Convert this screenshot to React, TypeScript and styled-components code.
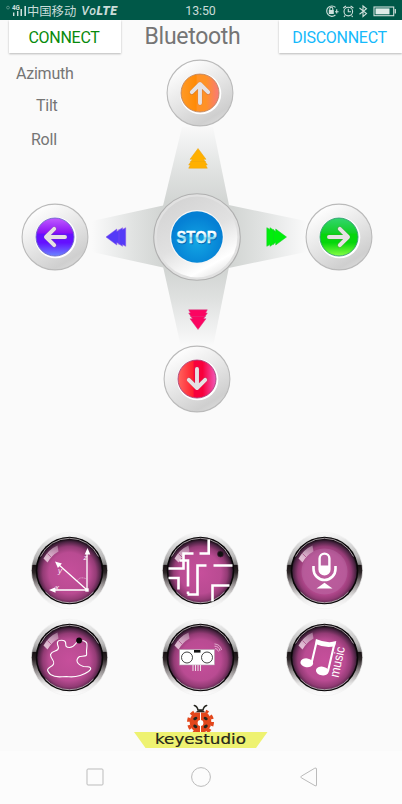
import React from 'react';
import styled, { createGlobalStyle } from 'styled-components';

const GlobalStyle = createGlobalStyle`
  * { box-sizing: border-box; }
  body { margin: 0; background: #fafafa; font-family: Roboto, "Noto Sans CJK SC", sans-serif; overflow: hidden; }
  svg { display: block; overflow: visible; }
`;

const Screen = styled.div`
  width: 402px;
  height: 804px;
  display: flex;
  flex-direction: column;
  background: #fafafa;
`;

const StatusBar = styled.header`
  height: 20px;
  flex: none;
  display: grid;
  grid-template-columns: 1fr 60px 1fr;
  align-items: center;
  padding: 0 4px 0 6px;
  background: #005848;
  color: #c9dcd8;
  font-size: 12px;
  line-height: 20px;
`;

const Carrier = styled.div`
  display: flex;
  align-items: center;
  white-space: nowrap;
`;

const CarrierName = styled.span`
  margin-left: 1px;
  font-family: "Noto Sans CJK SC", sans-serif;
  font-size: 12.3px;
`;

const Volte = styled.em`
  margin-left: 5px;
  font-size: 12.3px;
  font-weight: 500;
  letter-spacing: 0.5px;
  padding-top: 1px;
  b { font-weight: 900; }
`;

const Clock = styled.time`
  text-align: center;
  font-size: 12.4px;
  letter-spacing: -0.1px;
  padding: 1px 3px 0 0;
`;

const StatusIcons = styled.div`
  display: flex;
  justify-content: flex-end;
`;

const TopRow = styled.div`
  height: 33px;
  flex: none;
  display: grid;
  grid-template-columns: 112px 158px 123px;
  padding-left: 9px;
`;

const FlatButton = styled.button<{ $color: string }>`
  border: 0;
  margin: 0;
  padding: 1px 2px 0 0;
  background: #fff;
  color: ${(p) => p.$color};
  font: 400 16px Roboto, sans-serif;
  letter-spacing: -0.28px;
  box-shadow: 0 1px 2px rgba(0, 0, 0, 0.26);
  clip-path: inset(0 -4px -5px -4px);
`;

const Title = styled.h1`
  margin: 0;
  padding-right: 15px;
  text-align: center;
  color: #757575;
  font-size: 23px;
  letter-spacing: -0.3px;
  font-weight: 400;
  line-height: 33px;
`;

const Pad = styled.main`
  position: relative;
  height: 478px;
  flex: none;
  display: grid;
  grid-template-columns: 110px 174px 110px;
  grid-template-rows: 133px 101px 1fr;
`;

const Rays = styled.svg`
  position: absolute;
  left: 0;
  top: 0;
  pointer-events: none;
`;

const Readings = styled.div`
  display: flex;
  flex-direction: column;
  color: #757575;
  font-size: 16px;
  letter-spacing: -0.25px;
  line-height: 20px;
  padding: 11px 0 0 16px;
`;

const Reading = styled.span<{ $indent: number; $gap: number }>`
  margin-left: ${(p) => p.$indent}px;
  margin-top: ${(p) => p.$gap}px;
`;

const Slot = styled.div<{ $col: number; $row: number; $pad?: string; $start?: boolean }>`
  position: relative;
  grid-column: ${(p) => p.$col};
  grid-row: ${(p) => p.$row};
  display: flex;
  justify-content: center;
  align-items: ${(p) => (p.$start ? 'flex-start' : 'center')};
  padding: ${(p) => p.$pad ?? '0'};
`;

const RoundButton = styled.button`
  border: 0;
  padding: 0;
  margin: 0;
  background: none;
  border-radius: 50%;
`;

const Modes = styled.section`
  flex: none;
  display: grid;
  grid-template-columns: 82px 75px 78px;
  grid-template-rows: 79px 79px;
  column-gap: 49px;
  row-gap: 8px;
  justify-items: start;
  align-items: start;
  padding: 0 0 0 30px;
  height: 173px;
`;

const Brand = styled.div`
  display: flex;
  justify-content: center;
  height: 47px;
  flex: none;
  padding-right: 1px;
`;

const NavBar = styled.nav`
  flex: 1;
  background: #fcfcfc;
  display: grid;
  grid-template-columns: 105px 105px 17px;
  align-items: center;
  padding: 0 0 2px 86px;
`;

type Dir = 'up' | 'left' | 'right' | 'down';

const themes: Record<Dir, { rot: number; stops: string[]; vertical: boolean; ring: string }> = {
  up: { rot: 0, stops: ['#ff9a28', '#ff8a05', '#ff9226', '#f8797a'], vertical: false, ring: '#bd8561' },
  left: { rot: -90, stops: ['#c05cff', '#8a10f5', '#6410ff', '#6a86ff'], vertical: true, ring: '#6a66c8' },
  right: { rot: 90, stops: ['#32d66e', '#12cf25', '#05d60c', '#87ff45'], vertical: true, ring: '#339b72' },
  down: { rot: 180, stops: ['#ff655e', '#ff2030', '#f8003c', '#f05abb'], vertical: false, ring: '#a8437c' },
};

function DirectionButton({ dir }: { dir: Dir }) {
  const t = themes[dir];
  return (
    <RoundButton aria-label={dir}>
      <svg width="68" height="68" viewBox="-34 -34 68 68">
        <defs>
          <linearGradient id={`rim-${dir}`} x1="0.2" y1="0" x2="0.8" y2="1">
            <stop offset="0.05" stopColor="#fff" />
            <stop offset="0.45" stopColor="#e8e8e8" />
            <stop offset="0.85" stopColor="#cfcfcf" />
            <stop offset="1" stopColor="#dedede" />
          </linearGradient>
          <linearGradient id={`face-${dir}`} x1="0" y1="0" x2={t.vertical ? 0 : 1} y2={t.vertical ? 1 : 0}>
            <stop offset="0" stopColor={t.stops[0]} />
            <stop offset="0.4" stopColor={t.stops[1]} />
            <stop offset="0.42" stopColor={t.stops[2]} />
            <stop offset="0.65" stopColor={t.stops[2]} />
            <stop offset="1" stopColor={t.stops[3]} />
          </linearGradient>
        </defs>
        <circle r="32.9" fill={`url(#rim-${dir})`} stroke="#bababa" strokeWidth="1.1" />
        <circle cx="0.6" cy="0.6" r="20.7" fill="#fff" />
        <circle r="19" fill={`url(#face-${dir})`} stroke={t.ring} strokeWidth="0.9" />
        <g transform={`rotate(${t.rot})`} fill="none" strokeLinecap="round" strokeLinejoin="round">
          <path d="M0 10V-8M-8.2 -.5L0 -8.8L8.2 -.5" stroke="#8a5b62" strokeOpacity=".3" strokeWidth="4.8" />
          <path d="M0 10V-8M-8.2 -.8L0 -9L8.2 -.8" stroke="#e6e2e3" strokeWidth="3.9" />
        </g>
      </svg>
    </RoundButton>
  );
}

function StopButton() {
  return (
    <RoundButton aria-label="Stop">
      <svg width="88" height="88" viewBox="-44 -44 88 88">
        <defs>
          <linearGradient id="stopRim" x1="0.2" y1="0" x2="0.75" y2="1">
            <stop offset="0" stopColor="#d3d3d3" />
            <stop offset="0.5" stopColor="#e1e1e1" />
            <stop offset="0.85" stopColor="#fff" />
            <stop offset="1" stopColor="#e4e4e4" />
          </linearGradient>
          <radialGradient id="stopFace" cy="0.6">
            <stop offset="0" stopColor="#12a6e4" />
            <stop offset="1" stopColor="#0580d4" />
          </radialGradient>
          <linearGradient id="stopText" x1="0" y1="0" x2="0" y2="1">
            <stop offset="0.25" stopColor="#fff" />
            <stop offset="0.5" stopColor="#b6eaf9" />
            <stop offset="0.53" stopColor="#6fd0ed" />
            <stop offset="0.8" stopColor="#e8faff" />
          </linearGradient>
        </defs>
        <circle r="43.3" fill="#e1e1e1" stroke="#b0b0b0" strokeWidth="1.1" />
        <circle r="40.4" fill="url(#stopRim)" />
        <circle r="27" fill="#f6f6f6" />
        <circle r="25.8" fill="url(#stopFace)" />
        <text x="0.3" y="6.9" textAnchor="middle" textLength="40" lengthAdjust="spacingAndGlyphs" fontFamily="Liberation Sans" fontWeight="700" fontSize="16.5" fill="#0565b0" stroke="#0565b0" strokeWidth=".6">STOP</text>
        <text x="-0.5" y="6.2" textAnchor="middle" textLength="40" lengthAdjust="spacingAndGlyphs" fontFamily="Liberation Sans" fontWeight="700" fontSize="16.5" fill="url(#stopText)" stroke="url(#stopText)" strokeWidth=".4">STOP</text>
      </svg>
    </RoundButton>
  );
}

function RayArt() {
  const ray = (id: string, x1: number, y1: number, x2: number, y2: number) => (
    <linearGradient id={id} gradientUnits="userSpaceOnUse" x1={x1} y1={y1} x2={x2} y2={y2}>
      <stop offset="0" stopColor="#d2d5d3" />
      <stop offset="0.4" stopColor="#e0e2e1" />
      <stop offset="0.75" stopColor="#eff0f0" />
      <stop offset="1" stopColor="#fafafa" />
    </linearGradient>
  );
  const chevrons = 'M0 -10L8 .8H5.6L9.3 6.5H7.6L9.3 9.7H-9.3L-7.6 6.5H-9.3L-5.6 .8H-8Z';
  const crease = 'M-8 3H8';
  const marks = [
    { at: 'translate(198 158.5)', fill: '#ffb000', edge: '#eda50f' },
    { at: 'translate(198 319.5) rotate(180)', fill: '#fb0561', edge: '#d93a80' },
    { at: 'translate(116 237) rotate(-90)', fill: '#543af7', edge: '#8453ea' },
    { at: 'translate(276.5 237) rotate(90)', fill: '#00ee0c', edge: '#14ce24' },
  ];
  return (
    <Rays width="402" height="367" viewBox="0 53 402 367">
      <defs>
        {ray('rayUp', 197, 202, 197, 124)}
        {ray('rayDown', 197, 271, 197, 346)}
        {ray('rayLeft', 162, 236, 92, 236)}
        {ray('rayRight', 231, 236, 307, 236)}
      </defs>
      <path d="M182 127H213L230 210H162Z" fill="url(#rayUp)" />
      <path d="M162 262H230L213 347H181Z" fill="url(#rayDown)" />
      <path d="M92 221L170 204V269L92 252Z" fill="url(#rayLeft)" />
      <path d="M306 221L224 204V269L306 252Z" fill="url(#rayRight)" />
      {marks.map((m) => (
        <g key={m.at} transform={m.at} stroke={m.edge} strokeWidth=".5">
          <path d={chevrons} fill={m.fill} />
          <path d={crease} fill="none" />
        </g>
      ))}
    </Rays>
  );
}

function ModeButton({ name, children }: { name: string; children: React.ReactNode }) {
  return (
    <RoundButton aria-label={name}>
      <svg width="79" height="79" viewBox="-39.5 -39.5 79 79">
        <defs>
          <linearGradient id={`chrome-${name}`} x1="0" y1="0" x2="0" y2="1">
            <stop offset="0" stopColor="#fafafa" />
            <stop offset="0.12" stopColor="#e2e2e2" />
            <stop offset="0.32" stopColor="#b9b8b8" />
            <stop offset="0.42" stopColor="#858484" />
            <stop offset="0.43" stopColor="#171113" />
            <stop offset="0.53" stopColor="#2e2729" />
            <stop offset="0.68" stopColor="#969192" />
            <stop offset="0.84" stopColor="#e4e3e3" />
            <stop offset="1" stopColor="#fff" />
          </linearGradient>
          <radialGradient id={`orb-${name}`} cx="0.5" cy="0.54" r="0.53">
            <stop offset="0" stopColor="#c64f9b" />
            <stop offset="0.6" stopColor="#b94b92" />
            <stop offset="0.78" stopColor="#933b75" />
            <stop offset="0.92" stopColor="#482240" />
            <stop offset="1" stopColor="#0e080d" />
          </radialGradient>
          <linearGradient id={`gloss-${name}`} x1="1" y1="0" x2="0" y2="1">
            <stop offset="0" stopColor="#eadbe6" stopOpacity=".35" />
            <stop offset=".75" stopColor="#f5dceb" stopOpacity=".8" />
          </linearGradient>
        </defs>
        <circle r="38.2" fill={`url(#chrome-${name})`} stroke="#f2f2f2" strokeWidth=".7" />
        <circle r="33.8" fill="#0a0709" />
        <circle r="32.3" fill={`url(#orb-${name})`} />
        <path d="M-29 -14A32.2 32.2 0 0 1 29 -14M-24 21.5A32.2 32.2 0 0 0 24 21.5" fill="none" stroke="#c9bfc4" strokeWidth=".8" />
        <path d="M-26 -12Q-21 -21 -12 -25L-11 -19Q-18 -15 -22 -8Z" fill={`url(#gloss-${name})`} />
        <path d="M-22 -17L-18 -13" stroke="#a94f87" strokeWidth=".8" />
        {children}
      </svg>
    </RoundButton>
  );
}

function AxesIcon() {
  return (
    <g fill="none" stroke="#fff">
      <path d="M17.5 19.5H-16M17.5 19.5V-17M17.5 19.5L-11 -6" strokeWidth="1.3" />
      <path d="M-20.5 19.5L-14 16.7V22.3ZM18 -22.5L15.2 -16H20.8ZM-14.5 -9L-11.6 -2.6L-7.6 -7Z" fill="#fff" stroke="none" />
      <rect x="15.8" y="17.8" width="3.4" height="3.4" fill="#fff" stroke="none" />
      <path d="M8 10Q10 6 16 8" strokeDasharray="1 1" strokeWidth=".6" />
      <g fill="#fbeef6" stroke="none" fontFamily="Liberation Sans" fontStyle="italic" fontSize="8">
        <text x="-14.5" y="19">x</text>
        <text x="-11.5" y="2">y</text>
        <text x="14" y="-11">z</text>
      </g>
    </g>
  );
}

function MazeIcon() {
  return (
    <g>
      <path d="M8.2 -31V-17H-1M-7 -17H-17V-2H-32M-21 -10H-12.5V16M-32 7.5H-22V19M-12.5 23.5V21M-13 24H-3V-5H6M13 -5H32M29 15H12V31" fill="none" stroke="#fff" strokeWidth="2.6" />
      <circle cx="20" cy="-16.5" r="3" fill="#111" stroke="#452039" strokeWidth=".7" />
    </g>
  );
}

function MicIcon() {
  return (
    <g>
      <circle r="23" cy="1" fill="#b66aa1" fillOpacity=".5" />
      <rect x="-4.9" y="-16.9" width="9.8" height="20.8" rx="4.9" fill="#b762a0" stroke="#fff" strokeWidth="2.4" />
      <path d="M-4.5 -5H4.5V0A4.5 4.5 0 0 1 -4.5 0Z" fill="#fff" />
      <path d="M-11 -4.5V-1.5A11 11 0 0 0 11 -1.5V-4.5" fill="none" stroke="#fff" strokeWidth="2.6" />
      <path d="M0 12.3L8 18H-8Z" fill="#fff" />
    </g>
  );
}

function PathIcon() {
  return (
    <g>
      <path d="M9 -16C5 -15 6 -10 0 -10C-7 -10 -1 -16 -6 -17C-13 -18 -13 -15 -11 -10C-11 -5 -17 -8 -19 -3C-19 2 -13 4 -17 8C-22 11 -24 12 -19 17C-13 21 -9 19 -3 19C4 20 13 18 19 14C24 10 20 9 14 9C8 7 5 3 10 -1C19 -2 17 -1 17 -7C18 -14 18 -16 13 -17" fill="none" stroke="#fff" strokeWidth="1.1" />
      <circle cx="9.6" cy="-17" r="2.9" fill="#050505" />
    </g>
  );
}

function SonarIcon() {
  return (
    <g>
      <rect x="-21" y="-8" width="35" height="15.5" fill="#fff" stroke="#b09aab" strokeWidth=".6" />
      <circle cx="-13.5" cy="0" r="5.5" fill="none" stroke="#161616" strokeWidth=".8" />
      <circle cx="6.5" cy="0" r="5.5" fill="none" stroke="#161616" strokeWidth=".8" />
      <rect x="-6.5" y="-7.5" width="6.5" height="2.6" fill="#111" />
      <path d="M-7.5 7.5V13.5M-5 7.5V13.5M-2.5 7.5V13.5M0 7.5V13.5" stroke="#eee2e9" strokeWidth="1" />
      <path d="M14.5 -9Q17 -9 18 -6M14 -11.3Q18.5 -11.5 19.5 -6.5M14 -13.6Q20 -13 21 -7.5" fill="none" stroke="#edc8de" strokeWidth=".8" />
    </g>
  );
}

function MusicIcon() {
  return (
    <g>
      <ellipse cx="-17.7" cy="5.3" rx="6.4" ry="4.4" transform="rotate(8 -17.7 5.3)" fill="#fff" />
      <ellipse cx="-2.2" cy="13.5" rx="6.4" ry="4.4" transform="rotate(8 -2.2 13.5)" fill="#fff" />
      <path d="M-12.8 5L-7.5 -17.5M10.3 -15.5L3.4 14" fill="none" stroke="#fff" strokeWidth="2.1" />
      <path d="M-8.6 -18.5Q3 -13.5 11.8 -16.5L10.5 -11.3Q1 -9 -9 -13.5Z" fill="#fff" />
      <text transform="translate(14 20.5) rotate(-78)" fontFamily="Liberation Sans" fontSize="13.3" fill="#fff" textLength="31" lengthAdjust="spacingAndGlyphs">music</text>
    </g>
  );
}

function StatusGlyphs() {
  return (
    <svg width="73" height="16" viewBox="325 2 73 16" fill="none" stroke="#cfe0dc" strokeWidth="1.1">
      <path d="M335.5 6.4A5.2 5.2 0 1 0 335.4 14M336.7 8.3V12.5M335 10.8H338.6" />
      <rect x="328.8" y="9" width="5" height="4" fill="#cfe0dc" stroke="none" />
      <path d="M329.8 9V7.7A1.5 1.5 0 0 1 332.8 7.7V9" />
      <circle cx="348.3" cy="10.6" r="4.3" />
      <path d="M348.3 7.8V10.7H351M343.2 7L346 5M353.4 7L350.6 5M345 14.5L344 16M351.6 14.5L352.6 16" />
      <path d="M359.5 7L366.5 12.6L363 15.5V5L366.5 7.8L359.5 13.2" />
      <rect x="374" y="6" width="19.7" height="8.7" />
      <rect x="375.5" y="7.4" width="14" height="5.9" fill="#e0ece9" stroke="none" />
      <path d="M395.3 8V12.5" strokeWidth="1.3" />
    </svg>
  );
}

function SignalGlyph() {
  return (
    <svg width="20" height="14" viewBox="5 3 20 14" fill="#cfe0dc">
      <circle cx="7" cy="6.6" r="1.4" fill="none" stroke="#73a39a" strokeWidth=".7" />
      <text x="11" y="9" fontFamily="Roboto" fontWeight="700" fontSize="6.3">4G</text>
      <path d="M12 11.5h1.4V15H12zM16 10h1.4v5H16zM19.5 8H21v7h-1.5zM23.4 5H25v10h-1.6z" />
    </svg>
  );
}

function BrandLogo() {
  return (
    <svg width="134" height="46" viewBox="134 704 134 46">
      <circle cx="200.5" cy="722" r="10.8" fill="#e2461b" />
      <circle cx="200.5" cy="722" r="12" fill="none" stroke="#e2461b" strokeWidth="3" strokeDasharray="4.1 3.44" />
      <path d="M192 704H209L205 712.5H196Z" fill="#fafafa" />
      <g fill="none" stroke="#25251f" strokeLinecap="round">
        <path d="M194.3 705.5Q197 706 198 710H203Q204 706 206.7 705.5" strokeWidth="1.5" />
        <path d="M195.5 712.3Q200.5 707 205.5 712.3Z" fill="#25251f" stroke="none" />
      </g>
      <path d="M134 732H267.5L256 748H145.5Z" fill="#eef271" />
      <path d="M200.5 712.5V732" stroke="#fff" strokeWidth="1" />
      <circle cx="200.5" cy="723" r="2.9" fill="#fff" />
      <g fill="#25251f">
        <ellipse cx="195.3" cy="718.5" rx="2.2" ry="1.5" transform="rotate(-30 195.3 718.5)" />
        <ellipse cx="205.7" cy="718.5" rx="2.2" ry="1.5" transform="rotate(30 205.7 718.5)" />
        <ellipse cx="195.3" cy="726.4" rx="2.2" ry="1.5" transform="rotate(30 195.3 726.4)" />
        <ellipse cx="205.7" cy="726.4" rx="2.2" ry="1.5" transform="rotate(-30 205.7 726.4)" />
      </g>
      <text x="155" y="743.5" textLength="91" lengthAdjust="spacingAndGlyphs" fontFamily="DejaVu Sans" fontSize="14" fill="#25261a" stroke="#25261a" strokeWidth=".2">keyestudio</text>
    </svg>
  );
}

export default function App() {
  return (
    <Screen>
      <GlobalStyle />
      <StatusBar>
        <Carrier>
          <SignalGlyph />
          <CarrierName>中国移动</CarrierName>
          <Volte>Vo<b>LTE</b></Volte>
        </Carrier>
        <Clock>13:50</Clock>
        <StatusIcons><StatusGlyphs /></StatusIcons>
      </StatusBar>
      <TopRow>
        <FlatButton $color="#078a0b">CONNECT</FlatButton>
        <Title>Bluetooth</Title>
        <FlatButton $color="#15b9fb">DISCONNECT</FlatButton>
      </TopRow>
      <Pad>
        <RayArt />
        <Readings>
          <Reading $indent={0} $gap={0}>Azimuth</Reading>
          <Reading $indent={20} $gap={12}>Tilt</Reading>
          <Reading $indent={15} $gap={14}>Roll</Reading>
        </Readings>
        <Slot $col={2} $row={1} $start $pad="6px 0 0 6px"><DirectionButton dir="up" /></Slot>
        <Slot $col={1} $row={2}><DirectionButton dir="left" /></Slot>
        <Slot $col={2} $row={2}><StopButton /></Slot>
        <Slot $col={3} $row={2}><DirectionButton dir="right" /></Slot>
        <Slot $col={2} $row={3} $start $pad="58px 0 0"><DirectionButton dir="down" /></Slot>
      </Pad>
      <Modes>
        <ModeButton name="gravity"><AxesIcon /></ModeButton>
        <ModeButton name="maze"><MazeIcon /></ModeButton>
        <ModeButton name="voice"><MicIcon /></ModeButton>
        <ModeButton name="path"><PathIcon /></ModeButton>
        <ModeButton name="sonar"><SonarIcon /></ModeButton>
        <ModeButton name="music"><MusicIcon /></ModeButton>
      </Modes>
      <Brand><BrandLogo /></Brand>
      <NavBar>
        <svg width="18" height="18" fill="none" stroke="#bbb"><rect x="1" y="1" width="16" height="16" rx="1" /></svg>
        <svg width="20" height="20" fill="none" stroke="#bbb"><circle cx="10" cy="10" r="9.4" /></svg>
        <svg width="17" height="20" viewBox="-4 0 17 20" fill="none" stroke="#bbb" strokeLinejoin="round"><path d="M1.3 9.2L14.8 1.2Q16.5 .5 16.5 2V18Q16.5 19.5 15 18.7L1.3 10.8Q0 10 1.3 9.2Z" /></svg>
      </NavBar>
    </Screen>
  );
}
